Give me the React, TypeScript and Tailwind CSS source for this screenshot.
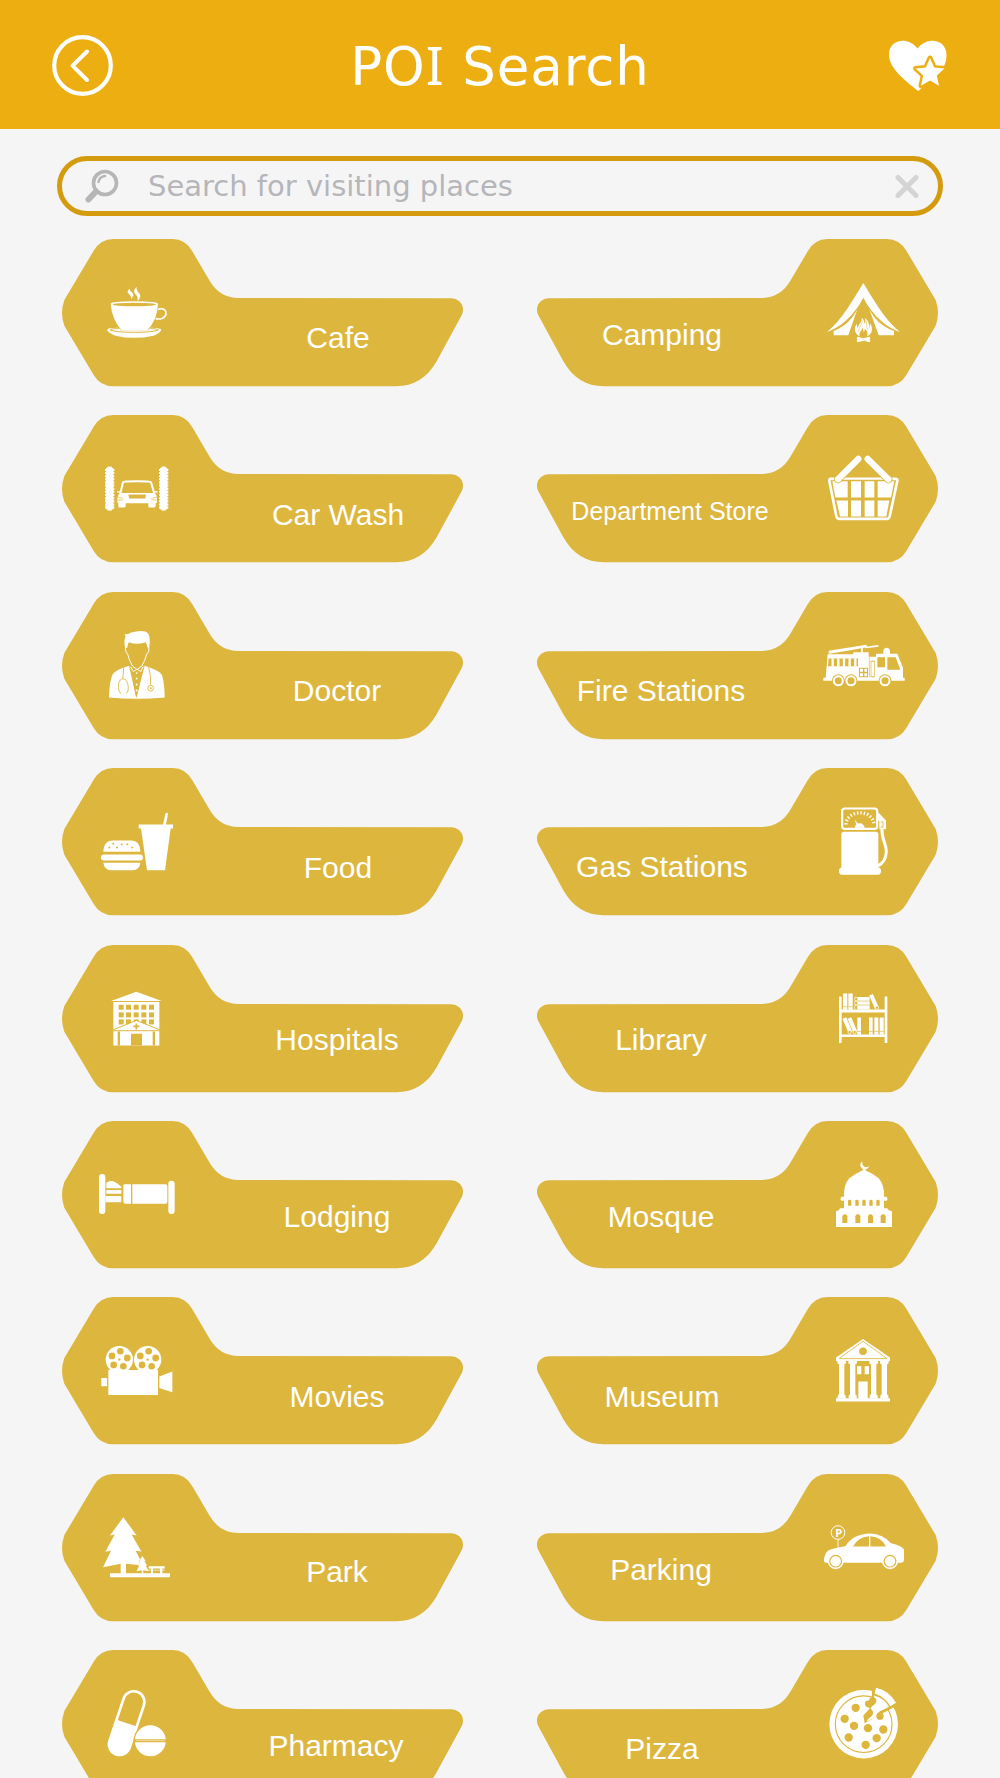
import { ReactNode } from "react";
import clsx from "clsx";

const GOLD = "#ddb63e";

interface Poi {
  name: string;
  // place of the label inside the lower bar of the card
  label: string;
  viewBox: string;
  icon: ReactNode;
}

const cafe = (
  <>
    <path d="M239 176C228 185 234 189 239 194C244 199 243 203 243 207C254 197 250 191 245 187C240 182 240 180 239 176Z" />
    <path d="M260 171C247 182 253 188 258 194C264 200 263 206 263 213C274 202 272 194 266 188C259 181 260 177 260 171Z" />
    <path d="M182 222Q182 214 253 214T324 222Q322 270 291 302H216Q186 270 182 222Z" />
    <ellipse cx="253" cy="223.500" rx="65" ry="5.500" fill={GOLD} />
    <path d="M324 238C343 232 350 243 348 252C345 266 330 269 317 266" fill="none" stroke="white" strokeWidth="5" />
    <path d="M171 299Q172 293 204 293L216 302H291L304 293Q333 294 334 299Q330 309 310 317Q253 330 196 317Q174 308 171 299Z" />
    <path d="M206 296Q180 296 180 300Q200 307 253 307Q308 307 325 300Q325 296 302 296" fill="none" stroke={GOLD} strokeWidth="3" />
  </>
);

const camping = (
  <>
    <path d="M1030 159C1062 210 1090 265 1140 306C1105 294 1060 262 1030 203C1000 262 955 294 921 306C970 265 998 210 1030 159Z" />
    <path d="M1012 238L985 316H941V303C975 290 997 268 1012 238Z" />
    <path d="M1048 238L1076 316H1122V303C1086 290 1063 268 1048 238Z" />
    <path d="M1020 319C1002 312 1002 293 1010 281C1011 289 1012 292 1014 295C1013 283 1028 277 1025 263C1031 268 1034 275 1033 282C1037 277 1037 270 1034 263C1046 272 1049 285 1047 294C1050 290 1050 286 1050 280C1061 297 1057 314 1040 319C1047 309 1040 301 1034 296C1034 302 1033 304 1031 306C1030 300 1029 297 1029 291C1027 302 1013 308 1020 319Z" />
    <path d="M1026 271C1029 283 1015 291 1016 306M1038 272C1041 283 1037 287 1044 300" fill="none" stroke={GOLD} strokeWidth="1.500" />
    <path d="M1011 333L1050 324M1011 324L1050 333" stroke="white" strokeWidth="7" />
    <path d="M1022 323L1040 334" stroke={GOLD} strokeWidth="1" />
  </>
);

const carWash = (
  <>
    {[89, 251].map((x) => (
      <g key={x} stroke="white">
        <path d={`M${x} 111V243`} strokeWidth="13" />
        <path d={`M${x} 115V239`} strokeWidth="22" />
        <path d={`M${x} 118V237`} strokeWidth="28" strokeDasharray="6 3.400" />
      </g>
    ))}
    <path d="M121 192L129 158Q131 155 171 155T213 158L223 192" fill="none" stroke="white" strokeWidth="6" />
    <path d="M119 190H225Q232 198 231 208V218Q229 221 227 221V230Q226 234 222 234H209Q205 234 205 230V221H137V230Q136 234 132 234H120Q115 234 115 230V221Q112 220 112 217V208Q112 198 119 190Z" />
    <path d="M111 187H121M223 187H233" stroke="white" strokeWidth="4" />
    <path d="M145 195H198L196 207H148Z" fill={GOLD} />
    <path d="M112 202L128 206M232 202L214 206M112 211H130M232 211H214" stroke={GOLD} strokeWidth="2" />
  </>
);

const doctor = (
  <>
    <path d="M134 611Q145 614 153 607Q180 599 195 604Q206 608 208 618Q212 636 207 654L202 651Q201 640 196 636Q172 645 147 636Q142 641 142 652L136 655Q130 630 137 620Z" />
    <path d="M136 652Q136 668 143 672Q148 693 158 708L171 718L185 708Q195 693 200 672Q208 668 207 652" fill="none" stroke="white" strokeWidth="3" />
    <path d="M147 707L154 712Q160 770 169 803Q180 770 186 712L194 707Q240 722 246 735Q254 760 254 802Q170 810 87 802Q88 752 98 732Q108 719 147 707Z" />
    <path d="M147 707L169 803L194 707L171 724Z" fill={GOLD} />
    <path d="M152 710L160 724L171 717L183 724L189 710" fill="none" stroke="white" strokeWidth="3" />
    <g fill="white">
      <circle cx="170" cy="729" r="2.500" />
      <circle cx="170" cy="745" r="3" />
      <circle cx="170" cy="763" r="3" />
      <circle cx="170" cy="781" r="3" />
    </g>
    <g fill="none" stroke={GOLD} strokeWidth="2.600">
      <path d="M131 711Q130 735 128 745M124 790Q113 786 116 760Q119 746 129 746Q142 747 144 765Q147 785 138 790" />
      <path d="M206 711Q213 735 212 764" />
      <circle cx="212" cy="774" r="8.500" />
    </g>
    <circle cx="212" cy="774" r="3" fill={GOLD} />
  </>
);

const departmentStore = (
  <>
    <path d="M106 148H92Q87 148 88 154L109 260Q111 268 119 268H260Q267 268 269 260L292 154Q293 148 287 148H274" fill="none" stroke="white" strokeWidth="8" />
    <path d="M128 147H252" stroke="white" strokeWidth="7" />
    <path d="M97 155H143V204H106ZM109 213H144V261H120ZM153 155H183V204H153ZM153 213H183V261H153ZM194 155H223V204H194ZM194 213H223V261H194ZM233 155H283L273 204H233ZM233 213H268L259 261H233Z" />
    <g strokeLinecap="round">
      <path d="M114 149L175 88M265 149L203 88" stroke={GOLD} strokeWidth="24" />
      <path d="M114 149L175 88M265 149L203 88" stroke="white" strokeWidth="19" />
    </g>
  </>
);

const fireStations = (
  <>
    <path d="M86 662L200 644V651L160 659L92 670H86Z" />
    <path d="M196 652L235 647" stroke="white" strokeWidth="5" />
    <path d="M186 650V668" stroke="white" strokeWidth="5" />
    <path d="M83 672H160V666H206V680H228V671H250V662Q252 653 260 653T270 662V671H292L309 713V743H314V752H70V743H77Z" />
    <path d="M86 685H174V708H84ZM232 681H255V711H232ZM262 681H287L301 719H262ZM177 713H204V741H177ZM212 692H224V741H212Z" fill={GOLD} />
    <path d="M98 684V709M115 684V709M132 684V709M149 684V709M166 684V709" stroke="white" strokeWidth="7" />
    <path d="M180 716H189V725H180ZM193 716H201V725H193ZM180 729H189V738H180ZM193 729H201V738H193ZM214 695H222V738H214Z" />
    <path d="M208 680V741" stroke={GOLD} strokeWidth="2" />
    {[115, 153, 255].map((x) => (
      <g key={x}>
        <circle cx={x} cy="752" r="19.500" fill={GOLD} />
        <circle cx={x} cy="752" r="16.500" />
        <circle cx={x} cy="752" r="10.500" fill={GOLD} />
      </g>
    ))}
  </>
);

const food = (
  <>
    <path d="M70 216Q71 182 99 182H152Q180 182 181 216Z" />
    <rect x="63" y="224" width="126" height="18" rx="9" />
    <path d="M70 249H181Q179 271 158 271H93Q73 271 70 249Z" />
    <g fill={GOLD}>
      <circle cx="88" cy="203" r="3" />
      <circle cx="100" cy="192" r="3" />
      <circle cx="111" cy="203" r="3" />
      <circle cx="125" cy="194" r="3" />
      <circle cx="142" cy="193" r="3" />
      <circle cx="157" cy="203" r="3" />
    </g>
    <path d="M176 134H279V146H272L255 271H201L183 146H176Z" />
    <path d="M253 136L260 103" stroke="white" strokeWidth="8" strokeLinecap="round" />
  </>
);

const hospitals = (
  <>
    <path d="M93 662L169 634L245 662Z" />
    <path d="M100 665H238V795H100Z" />
    {[673, 696, 717].map((y) =>
      [116, 138, 161, 184, 207].map((x) => (
        <rect key={`${x}-${y}`} x={x} y={y} width="15" height="15" fill={GOLD} />
      ))
    )}
    <path d="M93 751L169 720L246 751Z" stroke={GOLD} strokeWidth="3" />
    <path d="M113 753H120V795H113ZM218 753H225V795H218ZM153 760H186V795H153Z" fill={GOLD} />
    <path d="M169 729V747M160 738H178" stroke={GOLD} strokeWidth="5" />
  </>
);

const gasStations = (
  <>
    <rect x="126.500" y="86" width="105" height="61" rx="8" fill="none" stroke="white" strokeWidth="6.500" />
    <path d="M138 134A42 35 0 0 1 222 134" fill="none" stroke="white" strokeWidth="10" strokeDasharray="4.200 6" />
    <path d="M164 120L174 131Q190 127 194 144V147H165V144Q165 137 169 134Z" />
    <rect x="124" y="156" width="111" height="114" rx="8" />
    <rect x="117" y="262" width="126" height="23" rx="11" />
    <path d="M232 95L258 122V148H238V124L232 118Z" />
    <path d="M242 126H249V142H242" fill="none" stroke={GOLD} strokeWidth="2.500" />
    <path d="M246 148C244 180 259 190 259 215C258 238 248 251 234 258" fill="none" stroke="white" strokeWidth="9" />
  </>
);

const library = (
  <>
    <path d="M117 648H125V687H254V648H262V788H254V770H125V788H117ZM125 696V762H254V696Z" fillRule="evenodd" />
    <path d="M129 639H142V688H129ZM145 639H158V688H145ZM172 650H209V687H172ZM172 711H183V763H172ZM207 711H218V763H207ZM223 711H235V763H223ZM239 711H251V763H239Z" />
    <path d="M173 651H165Q162 656 165 661H173M173 663H165Q162 668 165 673H173M173 675H165Q162 680 165 686" fill="none" stroke="white" strokeWidth="2" />
    <path d="M172 662H209M172 674H209M129 679H142M145 679H158M172 753H183M207 753H218M223 753H235M239 753H251" stroke={GOLD} strokeWidth="2" />
    <path d="M213 643L231 684M133 713L151 755M148 713L166 755" stroke="white" strokeWidth="12" />
    <g fill={GOLD} stroke="white" strokeWidth="2">
      <circle cx="231" cy="682" r="5" />
      <circle cx="149" cy="755" r="5" />
      <circle cx="164" cy="755" r="5" />
    </g>
  </>
);

const lodging = (
  <>
    <rect x="57" y="102" width="19" height="120" rx="9" />
    <rect x="265" y="122" width="19" height="100" rx="9" />
    <path d="M76 168H124V187H76ZM79 150H124V161H79ZM79 145V128Q97 114 124 140V145Z" />
    <path d="M134 133H153V191H137Q130 191 130 185V137Q130 133 134 133Z" />
    <path d="M157 133H256Q262 133 262 139V185Q262 191 256 191H157Z" />
  </>
);

const movies = (
  <>
    {[0, 85].map((dx) => (
      <g key={dx} transform={`translate(${dx} 0)`}>
        <circle cx="118" cy="660" r="41" />
        <g fill={GOLD}>
          <circle cx="121" cy="635" r="10" />
          <circle cx="142" cy="655" r="10" />
          <circle cx="130" cy="680" r="10" />
          <circle cx="101" cy="676" r="10" />
          <circle cx="96" cy="649" r="10" />
          <circle cx="118" cy="660" r="3.500" />
        </g>
      </g>
    ))}
    <path d="M85 691H234V766H85ZM64 715H81V740H64ZM238 711L277 696V758L238 745Z" />
  </>
);

const mosque = (
  <>
    <path d="M187 64Q177 72 183 82Q188 88 192 90Q203 88 208 77Q199 85 191 79Q185 74 187 64Z" />
    <path d="M192 88L200 93Q222 102 236 115Q254 135 252 170H260Q265 176 260 182H252V205H262Q264 212 276 214V261H108V214Q118 212 120 205H132V182H124Q119 176 124 170H132Q130 135 148 115Q163 102 184 93Z" />
    <g fill={GOLD}>
      {[144, 166, 187, 208, 229].map((x) => (
        <path key={x} d={`M${x} 197V183Q${x} 179 ${x + 5} 179T${x + 10} 183V197Z`} />
      ))}
      {[127, 166, 204, 242].map((x) => (
        <path key={x} d={`M${x} 249V229Q${x} 224 ${x + 7.5} 222Q${x + 15} 224 ${x + 15} 229V249Z`} />
      ))}
    </g>
  </>
);

const museum = (
  <>
    <path d="M189 598L270 654V664H108V654Z" />
    <path d="M189 605L261 657H117Z" fill="none" stroke={GOLD} strokeWidth="2.500" />
    <circle cx="189" cy="635" r="11.500" fill={GOLD} />
    {[125, 158, 221, 253].map((x) => (
      <path key={x} d={`M${x - 13} 664H${x + 13}V671L${x + 8} 675V765L${x + 12} 767V777H${x - 12}V767L${x - 8} 765V675L${x - 13} 671Z`} />
    ))}
    <path d="M108 776H270V786H108ZM171 680H184V704H171ZM194 680H207V704H194ZM175 726H203V777H175Z" />
  </>
);

const park = (
  <>
    <path d="M130 81L170 136L155 133L184 184L167 182L190 226L138 221V250H122V221L69 231L93 182L76 185L104 133L90 136Z" />
    <path d="M187 197L198 213L194 213L202 227L198 227L207 243L190 241V250H185V241L169 243L177 227L173 228L181 212L177 213Z" stroke={GOLD} strokeWidth="1" />
    <path d="M90 249H270V261H90ZM206 228H254V235H247V250H240V235H219V250H213V235H206Z" />
    <path d="M205 240H255" stroke="white" strokeWidth="2" />
  </>
);

const parking = (
  <>
    <path d="M114 147V174" stroke="white" strokeWidth="2.500" />
    <circle cx="114" cy="127" r="20.500" fill="none" stroke="white" strokeWidth="3" />
    <text x="116" y="139" textAnchor="middle" fontFamily="Open Sans, sans-serif" fontSize="33" fontWeight="700">P</text>
    <path d="M72 212V206Q76 182 92 178Q115 171 136 168Q160 131 210 130Q250 132 273 159Q305 166 312 178V209Q312 218 302 218H78Q72 218 72 212Z" />
    <path d="M159 169Q172 141 207 138V169ZM211 138Q247 141 258 169H211Z" fill={GOLD} />
    {[107, 270].map((x) => (
      <g key={x}>
        <circle cx={x} cy="213" r="24" />
        <circle cx={x} cy="213" r="17.500" fill="none" stroke={GOLD} strokeWidth="3.500" />
      </g>
    ))}
  </>
);

const pharmacy = (
  <>
    <g transform="translate(140 700) rotate(18.5)">
      <rect x="-32" y="-99" width="64" height="198" rx="32" fill="none" stroke="white" strokeWidth="8" />
      <path d="M-32 0H32V67A32 32 0 0 1 -32 67Z" />
    </g>
    <circle cx="211" cy="753" r="48.500" stroke={GOLD} strokeWidth="4" />
    <path d="M164 752.500H259" stroke={GOLD} strokeWidth="9" />
    <path d="M168 752.500H255" stroke="white" strokeWidth="1.500" />
  </>
);

const pizza = (
  <>
    <circle cx="191" cy="703" r="103" />
    <circle cx="191" cy="703" r="85" fill="none" stroke={GOLD} strokeWidth="3.500" />
    <path d="M217 590L215 625L200 650L210 655L190 677L194 700L230 680L296 645Z" fill={GOLD} />
    <path d="M228 594Q268 603 288 639L271 649Q255 622 224 611Z" />
    <path d="M223 617Q253 625 267 651L250 660Q232 665 230 681L200 695Q205 685 214 680Q225 668 212 656Q214 648 224 643Q230 633 222 624Z" />
    <g fill={GOLD}>
      <circle cx="167" cy="654" r="12.500" />
      <circle cx="134" cy="687" r="12.500" />
      <circle cx="162" cy="708" r="12.500" />
      <circle cx="204" cy="715" r="12.500" />
      <circle cx="250" cy="719" r="12.500" />
      <circle cx="230" cy="745" r="12.500" />
      <circle cx="146" cy="743" r="12.500" />
      <circle cx="197" cy="765" r="12.500" />
      <circle cx="218" cy="633" r="11" />
      <circle cx="240" cy="679" r="11" />
      <circle cx="205" cy="642" r="10" />
    </g>
  </>
);

const leftColumn: Poi[] = [
  { name: "Cafe", label: "mt-[81px] text-[30px]", viewBox: "90 27 360 444", icon: cafe },
  { name: "Car Wash", label: "mt-[82px] text-[30px]", viewBox: "0 -43.8 360 444", icon: carWash },
  { name: "Doctor", label: "mt-[81px] -ml-[1px] text-[30px]", viewBox: "0 485.4 360 444", icon: doctor },
  { name: "Food", label: "mt-[82px] text-[30px]", viewBox: "0 -35.4 360 444", icon: food },
  { name: "Hospitals", label: "mt-[77px] -ml-[1px] text-[30px]", viewBox: "0 493.8 360 444", icon: hospitals },
  { name: "Lodging", label: "mt-[78px] -ml-[1px] text-[30px]", viewBox: "0 -57 360 444", icon: lodging },
  { name: "Movies", label: "mt-[82px] -ml-[1px] text-[30px]", viewBox: "0 472.2 360 444", icon: movies },
  { name: "Park", label: "mt-[80px] -ml-[1px] text-[30px]", viewBox: "0 -48.6 360 444", icon: park },
  { name: "Pharmacy", label: "mt-[78px] -ml-[2px] text-[30px]", viewBox: "0 480.6 360 444", icon: pharmacy },
];

const rightColumn: Poi[] = [
  { name: "Camping", label: "mt-[78px] text-[30px]", viewBox: "840 27 360 444", icon: camping },
  { name: "Department Store", label: "mt-[78px] -mr-[8px] text-[25px]", viewBox: "0 -43.8 360 444", icon: departmentStore },
  { name: "Fire Stations", label: "mt-[81px] mr-[1px] text-[30px]", viewBox: "0 485.4 360 444", icon: fireStations },
  { name: "Gas Stations", label: "mt-[81px] text-[30px]", viewBox: "0 -35.4 360 444", icon: gasStations },
  { name: "Library", label: "mt-[77px] mr-[1px] text-[30px]", viewBox: "0 493.8 360 444", icon: library },
  { name: "Mosque", label: "mt-[78px] mr-[1px] text-[30px]", viewBox: "0 -57 360 444", icon: mosque },
  { name: "Museum", label: "mt-[82px] text-[30px]", viewBox: "0 472.2 360 444", icon: museum },
  { name: "Parking", label: "mt-[78px] mr-[1px] text-[30px]", viewBox: "0 -48.6 360 444", icon: parking },
  { name: "Pizza", label: "mt-[81px] text-[30px]", viewBox: "0 480.6 360 444", icon: pizza },
];

function PoiCard({ name, label, viewBox, icon, flipped }: Poi & { flipped?: boolean }) {
  return (
    <button
      className={clsx(
        "relative flex h-[148px] w-[402px] items-start px-[18px]",
        flipped && "flex-row-reverse"
      )}
    >
      <svg
        className={clsx("absolute inset-0 h-full w-full", flipped && "-scale-x-100")}
        viewBox="36 27 1206 444"
        fill={GOLD}
      >
        <path d="M190 27H368Q406 27 427 64L478 151Q508 204 566 204L1203 205C1232 206 1247 232 1235 256L1160 394C1132 444 1090 469 1040 469H190Q151 469 131 435L43 287Q29 250 43 210L131 62Q152 27 190 27Z" />
      </svg>
      <svg className="relative h-[148px] w-[120px] shrink-0" viewBox={viewBox} fill="white">
        {icon}
      </svg>
      <span
        className={clsx(
          "relative flex h-[36px] w-[276px] shrink-0 items-center justify-center leading-[36px] whitespace-nowrap text-white",
          label
        )}
      >
        {name}
      </span>
    </button>
  );
}

function Header() {
  return (
    <header className="flex h-[129px] items-center justify-between bg-[#ecae10] px-[52px]">
      <svg className="h-[62px] w-[62px]" viewBox="0 0 62 62" fill="none" stroke="white" strokeWidth="4.200">
        <circle cx="30.500" cy="31.500" r="28.300" />
        <path d="M35 17.500L20.500 31.700L35 46" strokeLinecap="round" strokeLinejoin="round" strokeWidth="4" />
      </svg>
      <h1 className="pt-[3px] font-['DejaVu_Sans',Verdana,sans-serif] text-[53px] leading-[60px] tracking-[0.9px] whitespace-nowrap text-white">
        PO<span className="font-['Noto_Sans',sans-serif]">I</span> Search
      </h1>
      <svg className="h-[62px] w-[62px]" viewBox="0 0 62 62" fill="white">
        <path d="M31.500 56.500C20 47 3 35 3 20.500C3 5 22 2 31.500 14.500C41 2 60.500 5 60.500 21Q60.500 28 57 34L34.500 55Q33 57.500 31.500 56.500Z" />
        <path
          d="M44 24L48.200 33.500L58.500 34.500L50.800 41.500L53 51.700L44 46.400L35 51.700L37.200 41.500L29.500 34.500L39.800 33.500Z"
          stroke="#ecae10"
          strokeWidth="5"
          strokeLinejoin="round"
        />
        <path d="M44 24L48.200 33.500L58.500 34.500L50.800 41.500L53 51.700L44 46.400L35 51.700L37.200 41.500L29.500 34.500L39.800 33.500Z" />
      </svg>
    </header>
  );
}

function SearchBar() {
  return (
    <div className="mx-[57px] mt-[27px] flex h-[60px] items-center rounded-full border-[5px] border-[#d49b0f] pr-[19px] pl-[22px]">
      <svg className="h-[36px] w-[36px]" viewBox="0 0 36 36" fill="none" stroke="#b6b6b6" strokeLinecap="round">
        <circle cx="21" cy="15" r="11.500" strokeWidth="3.600" />
        <path d="M14.500 14Q15.500 8.500 21 8" strokeWidth="2.400" />
        <path d="M12 23.500L4.500 31.500" strokeWidth="6" />
      </svg>
      <span className="ml-[28px] flex-1 font-['DejaVu_Sans',Verdana,sans-serif] text-[29px] leading-[40px] whitespace-nowrap text-[#b5b5ba]">
        Search for visiting places
      </span>
      <svg className="h-[24px] w-[24px]" viewBox="0 0 24 24" stroke="#d4d4d4" strokeWidth="5" strokeLinecap="round">
        <path d="M3 3.500L21 21.500M21 3.500L3 21.500" />
      </svg>
    </div>
  );
}

export default function App() {
  return (
    <div className="h-[1778px] w-[1000px] overflow-hidden bg-[#f5f5f5] font-['Liberation_Sans',Arial,sans-serif]">
      <Header />
      <SearchBar />
      <main className="mt-[23px] flex justify-between px-[62px]">
        <div className="flex flex-col gap-[28.4px]">
          {leftColumn.map((poi) => (
            <PoiCard key={poi.name} {...poi} />
          ))}
        </div>
        <div className="flex flex-col gap-[28.4px]">
          {rightColumn.map((poi) => (
            <PoiCard key={poi.name} {...poi} flipped />
          ))}
        </div>
      </main>
    </div>
  );
}
